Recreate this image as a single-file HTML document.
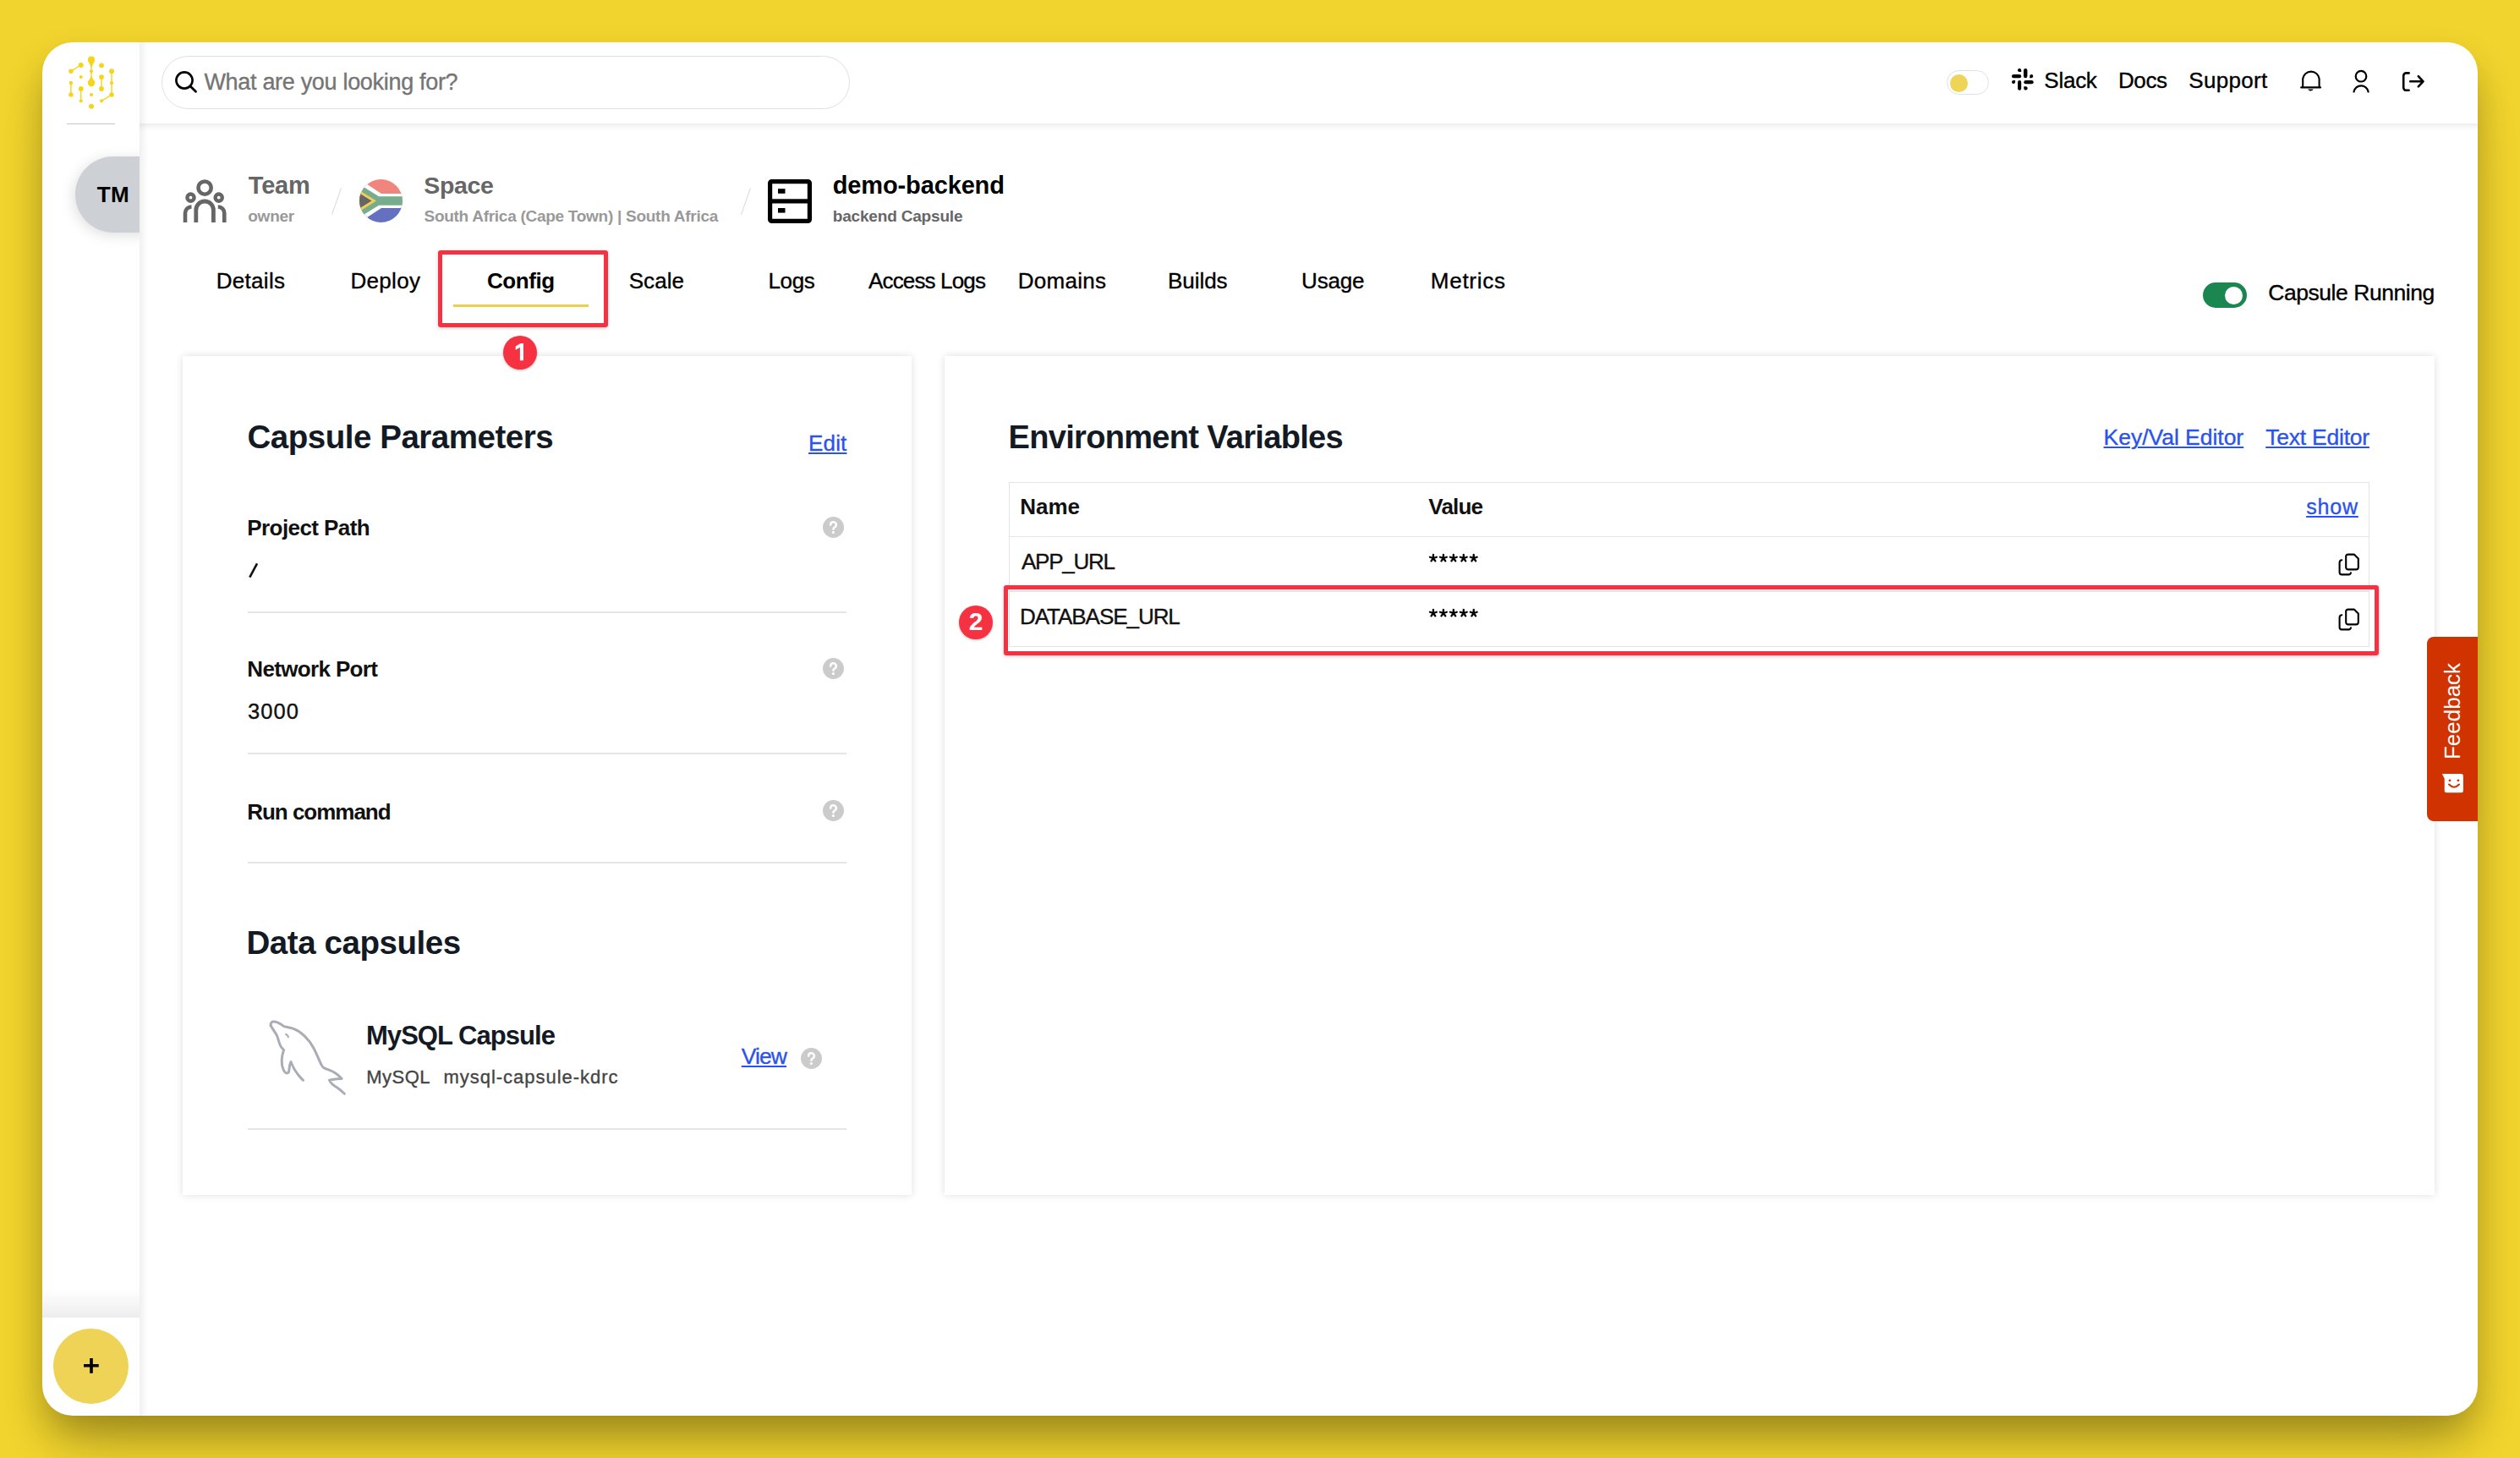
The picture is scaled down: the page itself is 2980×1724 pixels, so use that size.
<!DOCTYPE html>
<html><head><meta charset="utf-8">
<style>
html,body{margin:0;padding:0}
body{width:2980px;height:1724px;position:relative;overflow:hidden;background:#f1d42d;font-family:"Liberation Sans",sans-serif}
.a{position:absolute}
.t{position:absolute;line-height:1;white-space:pre;font-family:"Liberation Sans",sans-serif}
.u{text-decoration:underline;text-decoration-thickness:2px;text-underline-offset:3px}
#win{position:absolute;left:50px;top:50px;width:2880px;height:1624px;background:#fff;border-radius:36px;box-shadow:0 24px 46px -4px rgba(0,0,0,0.29),0 50px 80px -24px rgba(0,0,0,0.14)}
.card{position:absolute;background:#fff;box-shadow:0 0 9px rgba(0,0,0,0.13)}
.div{position:absolute;height:2px;background:#e3e6e8}
.q{position:absolute;width:25px;height:25px;border-radius:50%;background:#cbcbcb}
.q svg{position:absolute;left:0;top:0}
.badge{position:absolute;width:40px;height:40px;border-radius:50%;background:#f63242;box-shadow:0 1px 3px rgba(0,0,0,0.25)}
.redbox{position:absolute;border:5px solid #f53242;border-radius:3px;box-sizing:border-box;box-shadow:0 1px 4px rgba(0,0,0,0.2)}
</style></head><body>
<div id="win"></div>

<!-- sidebar shadow & header shadow -->
<div class="a" style="left:165px;top:50px;width:10px;height:1624px;background:linear-gradient(90deg,rgba(0,0,0,0.06),rgba(0,0,0,0))"></div>
<div class="a" style="left:165px;top:146px;width:2765px;height:10px;background:linear-gradient(180deg,rgba(0,0,0,0.065),rgba(0,0,0,0.015) 60%,rgba(0,0,0,0))"></div>

<!-- logo -->
<svg class="a" style="left:76px;top:62px" width="64" height="72" viewBox="76 62 64 72">
<g fill="#f5d41a" stroke="#f5d41a">
<path d="M108 70.4 L108 98" stroke-width="1.4"/>
<circle cx="108" cy="70.4" r="4" stroke="none"/>
<path d="M104 71.5 Q108 80 108 80 Q108 80 112 71.5Z" stroke="none"/>
<circle cx="108" cy="84.2" r="2" stroke="none"/>
<circle cx="108" cy="98" r="4.2" stroke="none"/>
<path d="M104 97 L108 90 L112 97Z" stroke="none"/>
<circle cx="120" cy="77.3" r="2.9" stroke="none"/>
<path d="M83.9 84.2 L95.75 77" stroke-width="1.4"/>
<circle cx="83.9" cy="84.2" r="2.7" stroke="none"/>
<circle cx="95.75" cy="77" r="3" stroke="none"/>
<circle cx="95.75" cy="91.1" r="2" stroke="none"/>
<path d="M83.9 98 L83.9 111.9" stroke-width="1.4"/>
<circle cx="83.9" cy="98" r="2.2" stroke="none"/>
<circle cx="83.9" cy="111.9" r="2.7" stroke="none"/>
<path d="M95.75 105 L95.75 119.3" stroke-width="1.4"/>
<circle cx="95.75" cy="105" r="2.9" stroke="none"/>
<circle cx="95.75" cy="119.3" r="2" stroke="none"/>
<circle cx="108" cy="112" r="2" stroke="none"/>
<circle cx="108" cy="125.7" r="3" stroke="none"/>
<path d="M120 91.1 L120 105" stroke-width="1.4"/>
<circle cx="120" cy="91.1" r="2.9" stroke="none"/>
<circle cx="120" cy="105" r="2.9" stroke="none"/>
<path d="M132 84.2 L132 112 L120 119.3" stroke-width="1.4" fill="none"/>
<circle cx="132" cy="84.2" r="2.9" stroke="none"/>
<circle cx="132" cy="98" r="2" stroke="none"/>
<circle cx="132" cy="112" r="2.7" stroke="none"/>
<circle cx="120" cy="119.3" r="2" stroke="none"/>
</g></svg>
<div class="a" style="left:79px;top:145.5px;width:57px;height:1.3px;background:#c6c6c6"></div>

<!-- TM pill -->
<div class="a" style="left:50px;top:150px;width:115px;height:170px;overflow:hidden"><div class="a" style="left:39px;top:35px;width:90px;height:90px;background:#cdd0d5;border-radius:45px 0 0 45px;box-shadow:-2px 3px 16px rgba(0,0,0,0.13)"></div></div>

<!-- sidebar bottom -->
<div class="a" style="left:50px;top:1524px;width:115px;height:34px;background:linear-gradient(180deg,rgba(0,0,0,0),rgba(0,0,0,0.07))"></div>
<div class="a" style="left:63px;top:1571px;width:89px;height:89px;border-radius:50%;background:#efd356"></div>
<svg class="a" style="left:99px;top:1606px" width="18" height="18" viewBox="0 0 18 18"><path d="M7.2 0h3.6v6.9h6.9v3.6h-6.9v7.3H7.2v-7.3H0V6.9h7.2z" fill="#000"/></svg>

<!-- search -->
<div class="a" style="left:191px;top:66px;width:814px;height:63px;border:1.2px solid #dfdfe8;border-radius:33px;box-sizing:border-box"></div>
<svg class="a" style="left:205px;top:82px" width="30" height="30" viewBox="0 0 30 30"><circle cx="13" cy="13" r="9.6" fill="none" stroke="#000" stroke-width="2.6"/><path d="M19.8 19.8 L26.5 26.3" stroke="#000" stroke-width="2.8" stroke-linecap="round"/></svg>

<!-- theme toggle -->
<div class="a" style="left:2302px;top:83px;width:50px;height:29px;border:1px solid #dfe1e6;border-radius:15px;box-sizing:border-box"></div>
<div class="a" style="left:2306px;top:88px;width:21px;height:21px;border-radius:50%;background:#efd45a"></div>
<!-- slack icon -->
<svg class="a" style="left:2379px;top:81px" width="26" height="26" viewBox="0 0 26 26" fill="#000">
<rect x="0" y="7.1" width="11.2" height="4.1" rx="2.05"/>
<rect x="14" y="0" width="4.4" height="11.2" rx="2.2"/>
<path d="M7 2.05 A2.05 2.05 0 0 1 11.2 2.05 V4.1 H9.1 A2.05 2.05 0 0 1 7 2.05Z"/>
<path d="M21.2 9.15 A2.05 2.05 0 1 1 23.3 11.2 H21.2Z"/>
<path d="M4.1 14 V16.1 A2.05 2.05 0 1 1 2 14Z"/>
<rect x="7.1" y="14" width="4.1" height="11.7" rx="2.05"/>
<rect x="14.3" y="14" width="11.4" height="4.3" rx="2.15"/>
<path d="M14.3 21.2 H16.4 A2.2 2.2 0 1 1 14.3 23.4Z"/>
</svg>
<!-- bell -->
<svg class="a" style="left:2718px;top:81px" width="30" height="30" viewBox="0 0 30 30" fill="none" stroke="#000" stroke-width="2.1" stroke-linecap="round">
<path d="M5.2 21.9 V12 A9.8 9.8 0 0 1 24.6 12 V21.9"/>
<path d="M3.2 22.4 H26"/>
<path d="M11.2 24.5 A3.6 3.6 0 0 0 17.6 24.5Z" fill="#000" stroke="none"/>
</svg>
<!-- user -->
<svg class="a" style="left:2778px;top:81px" width="30" height="30" viewBox="0 0 30 30" fill="none" stroke="#000" stroke-width="2.2">
<circle cx="14" cy="9.2" r="6.3"/>
<path d="M5.5 27.5 A8.7 8.7 0 0 1 22.6 27.5" stroke-linecap="round"/>
</svg>
<!-- logout -->
<svg class="a" style="left:2836px;top:81px" width="34" height="30" viewBox="0 0 34 30" fill="none" stroke="#000" stroke-width="2.6" stroke-linecap="round" stroke-linejoin="round">
<path d="M12.6 5.4 H9.6 A3.2 3.2 0 0 0 6.2 8.6 V22.6 A3.2 3.2 0 0 0 9.6 25.8 H12.6"/>
<path d="M14.2 15.3 H29.5 M23.8 9.2 L29.5 15.3 L23.8 21.3"/>
</svg>

<!-- team icon -->
<svg class="a" style="left:0;top:0" width="300" height="300" viewBox="0 0 300 300" fill="none" stroke="#666" stroke-width="4.6">
<circle cx="242.1" cy="222.1" r="7.6"/>
<circle cx="225.5" cy="233.6" r="4.1" stroke-width="4.4"/>
<circle cx="258.7" cy="233.6" r="4.1" stroke-width="4.4"/>
<path d="M231.8 263 V248.3 A10.3 10.3 0 0 1 252.4 248.3 V263" stroke-width="4.8"/>
<path d="M219 263 V252 A7.5 7.5 0 0 1 226.5 244.5"/>
<path d="M265.3 263 V252 A7.5 7.5 0 0 0 257.8 244.5"/>
</svg>
<!-- slashes -->
<svg class="a" style="left:390px;top:220px" width="16" height="36"><path d="M13.5 2.5 L2.5 33.5" stroke="#dcdfe4" stroke-width="1.2"/></svg>
<svg class="a" style="left:874px;top:220px" width="16" height="36"><path d="M13.5 2.5 L2.5 33.5" stroke="#dcdfe4" stroke-width="1.2"/></svg>
<!-- flag -->
<svg class="a" style="left:425px;top:212px" width="51" height="51" viewBox="0 0 51 51">
<defs><clipPath id="fc"><circle cx="25.5" cy="25.5" r="25.5"/></clipPath></defs>
<g clip-path="url(#fc)">
<rect x="0" y="0" width="51" height="25.5" fill="#f0857d"/>
<rect x="0" y="25.5" width="51" height="25.5" fill="#6470c0"/>
<path d="M0 0 L26 17 H51 V34 H26 L0 51Z" fill="#fff"/>
<path d="M0 6 L23 20.2 H51 V30.8 H23 L0 45Z" fill="#77ad8c"/>
<path d="M0 13 L20 25.5 L0 38Z" fill="#f3cd5a"/>
<path d="M0 16.5 L14.5 25.5 L0 34.5Z" fill="#666"/>
</g></svg>
<!-- server icon -->
<svg class="a" style="left:908px;top:212px" width="52" height="52" viewBox="0 0 52 52">
<rect x="2.6" y="2.6" width="46.8" height="46.8" rx="2" fill="none" stroke="#000" stroke-width="5.2"/>
<rect x="2" y="23.3" width="48" height="5.2" fill="#000"/>
<rect x="12" y="11.2" width="8.5" height="5.6" fill="#000"/>
<rect x="12" y="34" width="8.5" height="5.6" fill="#000"/>
</svg>

<!-- tabs underline + red box + badge -->
<div class="a" style="left:536px;top:359.5px;width:160px;height:3.5px;background:#ecd04a"></div>
<div class="redbox" style="left:518px;top:296px;width:201px;height:91px"></div>

<!-- capsule running toggle -->
<div class="a" style="left:2605px;top:334px;width:52px;height:30px;border-radius:15px;background:#1a8650"></div>
<div class="a" style="left:2631px;top:338.5px;width:21px;height:21px;border-radius:50%;background:#fff"></div>

<!-- left card -->
<div class="card" style="left:216px;top:421px;width:862px;height:992px"></div>
<div class="div" style="left:293px;top:722.5px;width:708px"></div>
<div class="div" style="left:293px;top:889.5px;width:708px"></div>
<div class="div" style="left:293px;top:1018.5px;width:708px"></div>
<div class="div" style="left:293px;top:1334px;width:708px"></div>
<div class="q" style="left:973px;top:610.7px"><svg width="25" height="25" viewBox="0 0 25 25"><path d="M9.2 9.6 A3.3 3.3 0 1 1 14.2 12.3 Q12.4 13.3 12.4 14.8" fill="none" stroke="#fff" stroke-width="2.5" stroke-linecap="round"/><circle cx="12.4" cy="18.5" r="1.6" fill="#fff"/></svg></div>
<div class="q" style="left:973px;top:778px"><svg width="25" height="25" viewBox="0 0 25 25"><path d="M9.2 9.6 A3.3 3.3 0 1 1 14.2 12.3 Q12.4 13.3 12.4 14.8" fill="none" stroke="#fff" stroke-width="2.5" stroke-linecap="round"/><circle cx="12.4" cy="18.5" r="1.6" fill="#fff"/></svg></div>
<div class="q" style="left:973px;top:946px"><svg width="25" height="25" viewBox="0 0 25 25"><path d="M9.2 9.6 A3.3 3.3 0 1 1 14.2 12.3 Q12.4 13.3 12.4 14.8" fill="none" stroke="#fff" stroke-width="2.5" stroke-linecap="round"/><circle cx="12.4" cy="18.5" r="1.6" fill="#fff"/></svg></div>
<div class="q" style="left:947px;top:1239px"><svg width="25" height="25" viewBox="0 0 25 25"><path d="M9.2 9.6 A3.3 3.3 0 1 1 14.2 12.3 Q12.4 13.3 12.4 14.8" fill="none" stroke="#fff" stroke-width="2.5" stroke-linecap="round"/><circle cx="12.4" cy="18.5" r="1.6" fill="#fff"/></svg></div>
<!-- dolphin -->
<svg class="a" style="left:310px;top:1195px" width="110" height="110" viewBox="0 0 110 110" fill="none" stroke="#a8adb6" stroke-width="3" stroke-linejoin="round" stroke-linecap="round">
<path d="M10.2 17.8 C9.5 14 12 12.6 14.5 13 C18 13.5 22 15.5 25.7 18.6 C29 19.5 33 19.8 37 21.3 C42 23.2 46 26 50 29.8 C54 33.6 58 38.5 61 44.5 C64 50 67 58 70.3 64.5 C71.2 66.5 72.5 67.8 74.5 68.5 C78 69.8 82 71 86 73.5 C89 75.5 92 78 94 80.5 C89 80.8 84 81 79.5 82.3 C81 86 85 89 89 91.3 C92 93.3 95 96 97.3 98.3"/>
<path d="M10.2 17.8 C12 21 15 25 17.2 29 C19 33 20 38 21.6 41.5 C22.5 43.5 24 45 25.6 46.5 C24.5 50 23.5 53 23.3 57 C23 61 23.5 66 25 69.5 C26 72 27.5 74 29.4 74 C31 74 31.7 72.5 31.8 70.5 C32 67 32.5 63.5 34 60.5 C36 66 40 73 44 77.5 C45.5 79.5 47 81 48.5 82.3" />
<path d="M28 27.8 C29.5 28.5 30.8 29.7 30.9 31.4" stroke-width="2"/>
</svg>

<!-- right card -->
<div class="card" style="left:1117px;top:421px;width:1762px;height:992px"></div>
<div class="a" style="left:1193px;top:569.5px;width:1609px;height:195px;border:1.5px solid #e1e4e8;box-sizing:border-box"></div>
<div class="a" style="left:1193px;top:633.5px;width:1609px;height:1.5px;background:#e1e4e8"></div>
<div class="a" style="left:1193px;top:698px;width:1609px;height:1.5px;background:#e1e4e8"></div>
<!-- stars -->
<svg class="a" style="left:0;top:0" width="2980" height="800" viewBox="0 0 2980 800"><path d="M1694.90 660.00 L1694.90 655.90 M1694.90 660.00 L1698.80 658.73 M1694.90 660.00 L1697.31 663.32 M1694.90 660.00 L1692.49 663.32 M1694.90 660.00 L1691.00 658.73 M1706.85 660.00 L1706.85 655.90 M1706.85 660.00 L1710.75 658.73 M1706.85 660.00 L1709.26 663.32 M1706.85 660.00 L1704.44 663.32 M1706.85 660.00 L1702.95 658.73 M1718.80 660.00 L1718.80 655.90 M1718.80 660.00 L1722.70 658.73 M1718.80 660.00 L1721.21 663.32 M1718.80 660.00 L1716.39 663.32 M1718.80 660.00 L1714.90 658.73 M1730.75 660.00 L1730.75 655.90 M1730.75 660.00 L1734.65 658.73 M1730.75 660.00 L1733.16 663.32 M1730.75 660.00 L1728.34 663.32 M1730.75 660.00 L1726.85 658.73 M1742.70 660.00 L1742.70 655.90 M1742.70 660.00 L1746.60 658.73 M1742.70 660.00 L1745.11 663.32 M1742.70 660.00 L1740.29 663.32 M1742.70 660.00 L1738.80 658.73 M1694.90 725.00 L1694.90 720.90 M1694.90 725.00 L1698.80 723.73 M1694.90 725.00 L1697.31 728.32 M1694.90 725.00 L1692.49 728.32 M1694.90 725.00 L1691.00 723.73 M1706.85 725.00 L1706.85 720.90 M1706.85 725.00 L1710.75 723.73 M1706.85 725.00 L1709.26 728.32 M1706.85 725.00 L1704.44 728.32 M1706.85 725.00 L1702.95 723.73 M1718.80 725.00 L1718.80 720.90 M1718.80 725.00 L1722.70 723.73 M1718.80 725.00 L1721.21 728.32 M1718.80 725.00 L1716.39 728.32 M1718.80 725.00 L1714.90 723.73 M1730.75 725.00 L1730.75 720.90 M1730.75 725.00 L1734.65 723.73 M1730.75 725.00 L1733.16 728.32 M1730.75 725.00 L1728.34 728.32 M1730.75 725.00 L1726.85 723.73 M1742.70 725.00 L1742.70 720.90 M1742.70 725.00 L1746.60 723.73 M1742.70 725.00 L1745.11 728.32 M1742.70 725.00 L1740.29 728.32 M1742.70 725.00 L1738.80 723.73 " stroke="#000" stroke-width="2.3" stroke-linecap="round" fill="none"/></svg>
<!-- copy icons -->
<svg class="a" style="left:2762px;top:652px" width="30" height="32" viewBox="0 0 30 32" fill="none" stroke="#000" stroke-width="2.1" stroke-linecap="round" stroke-linejoin="round">
<path d="M12.2 5.6 A2.6 2.6 0 0 1 14.8 3.6 H21.8 L26.8 8.6 V18.8 A2.6 2.6 0 0 1 24.2 21.4 H14.8 A2.6 2.6 0 0 1 12.2 18.8Z"/>
<path d="M7.3 10.2 A3 3 0 0 0 4.6 13 V24.8 A2.6 2.6 0 0 0 7.2 27.4 H15.4 A2.6 2.6 0 0 0 18 25.2"/>
</svg>
<svg class="a" style="left:2762px;top:717px" width="30" height="32" viewBox="0 0 30 32" fill="none" stroke="#000" stroke-width="2.1" stroke-linecap="round" stroke-linejoin="round">
<path d="M12.2 5.6 A2.6 2.6 0 0 1 14.8 3.6 H21.8 L26.8 8.6 V18.8 A2.6 2.6 0 0 1 24.2 21.4 H14.8 A2.6 2.6 0 0 1 12.2 18.8Z"/>
<path d="M7.3 10.2 A3 3 0 0 0 4.6 13 V24.8 A2.6 2.6 0 0 0 7.2 27.4 H15.4 A2.6 2.6 0 0 0 18 25.2"/>
</svg>
<div class="redbox" style="left:1187px;top:692px;width:1626px;height:83px"></div>

<!-- feedback tab -->
<div class="a" style="left:2869.5px;top:753px;width:60.5px;height:218px;background:#d13300;border-radius:8px 0 0 8px"></div>
<div class="t" style="left:2900px;top:840.6px;font-size:26px;color:#fff;transform:translate(-50%,-50%) rotate(-90deg);transform-origin:center">Feedback</div>
<svg class="a" style="left:2886px;top:913px" width="28" height="26" viewBox="0 0 28 26">
<path d="M1.8 1.9 H24.4 A2.5 2.5 0 0 1 26.9 4.4 V21.7 A2.5 2.5 0 0 1 24.4 24.2 H7.2 A2.5 2.5 0 0 1 4.7 21.7 V7.5 Z" fill="#fff"/>
<circle cx="11" cy="9.8" r="1.4" fill="#d13300"/><circle cx="20.9" cy="9.8" r="1.4" fill="#d13300"/>
<path d="M10 14.6 Q16 20.8 22 14.6" fill="none" stroke="#d13300" stroke-width="2.1" stroke-linecap="round"/>
</svg>

<!-- badge numbers -->
<div class="badge" style="left:595px;top:397px"></div>
<div class="badge" style="left:1134px;top:716px"></div>

<svg class="a" style="left:600px;top:400px" width="30" height="30" viewBox="600 400 30 30"><path d="M609.7 409.6 L615.6 406 H619 V426.3 H614.9 V410.8 L609.7 413.8 Z" fill="#fff"/></svg>
<div class="t" style="left:1143px;top:720px;width:22px;text-align:center;font-size:30px;font-weight:bold;color:#fff">2</div>

<svg class="a" style="left:290px;top:662px" width="20" height="26" viewBox="290 662 20 26"><path d="M295.3 682.6 L304 666.3" stroke="#111" stroke-width="2.6" stroke-linecap="butt"/></svg>
<div class="t" style="left:241.45px;top:83.75px;font-size:27px;font-weight:normal;color:#757575;letter-spacing:-0.312px;-webkit-text-stroke:0.35px #757575;">What are you looking for?</div>
<div class="t" style="left:2417.35px;top:81.90px;font-size:26px;font-weight:normal;color:#000;letter-spacing:-0.262px;-webkit-text-stroke:0.35px #000;">Slack</div>
<div class="t" style="left:2505.00px;top:81.90px;font-size:26px;font-weight:normal;color:#000;letter-spacing:-0.417px;-webkit-text-stroke:0.35px #000;">Docs</div>
<div class="t" style="left:2588.25px;top:81.90px;font-size:26px;font-weight:normal;color:#000;letter-spacing:0.333px;-webkit-text-stroke:0.35px #000;">Support</div>
<div class="t" style="left:114.75px;top:216.90px;font-size:26px;font-weight:bold;color:#000;letter-spacing:0.250px;">TM</div>
<div class="t" style="left:293.75px;top:205.35px;font-size:29px;font-weight:bold;color:#666;letter-spacing:-0.167px;">Team</div>
<div class="t" style="left:293.25px;top:245.85px;font-size:19px;font-weight:bold;color:#999;letter-spacing:-0.250px;">owner</div>
<div class="t" style="left:501.25px;top:205.47px;font-size:28.5px;font-weight:bold;color:#666;letter-spacing:-0.312px;">Space</div>
<div class="t" style="left:501.50px;top:245.85px;font-size:19px;font-weight:bold;color:#999;letter-spacing:-0.276px;">South Africa (Cape Town) | South Africa</div>
<div class="t" style="left:984.75px;top:205.35px;font-size:29px;font-weight:bold;color:#000;letter-spacing:-0.136px;">demo-backend</div>
<div class="t" style="left:984.75px;top:245.85px;font-size:19px;font-weight:bold;color:#666;letter-spacing:-0.179px;">backend Capsule</div>
<div class="t" style="left:255.80px;top:318.90px;font-size:26px;font-weight:normal;color:#000;letter-spacing:0.283px;-webkit-text-stroke:0.35px #000;">Details</div>
<div class="t" style="left:414.50px;top:318.90px;font-size:26px;font-weight:normal;color:#000;letter-spacing:0.300px;-webkit-text-stroke:0.35px #000;">Deploy</div>
<div class="t" style="left:576.00px;top:318.90px;font-size:26px;font-weight:bold;color:#000;letter-spacing:-0.430px;">Config</div>
<div class="t" style="left:743.75px;top:318.90px;font-size:26px;font-weight:normal;color:#000;letter-spacing:0.025px;-webkit-text-stroke:0.35px #000;">Scale</div>
<div class="t" style="left:908.50px;top:318.90px;font-size:26px;font-weight:normal;color:#000;letter-spacing:-0.367px;-webkit-text-stroke:0.35px #000;">Logs</div>
<div class="t" style="left:1027.00px;top:318.90px;font-size:26px;font-weight:normal;color:#000;letter-spacing:-0.850px;-webkit-text-stroke:0.35px #000;">Access Logs</div>
<div class="t" style="left:1203.70px;top:318.90px;font-size:26px;font-weight:normal;color:#000;letter-spacing:0.300px;-webkit-text-stroke:0.35px #000;">Domains</div>
<div class="t" style="left:1381.00px;top:318.90px;font-size:26px;font-weight:normal;color:#000;letter-spacing:-0.050px;-webkit-text-stroke:0.35px #000;">Builds</div>
<div class="t" style="left:1539.00px;top:318.90px;font-size:26px;font-weight:normal;color:#000;letter-spacing:-0.150px;-webkit-text-stroke:0.35px #000;">Usage</div>
<div class="t" style="left:1691.80px;top:318.90px;font-size:26px;font-weight:normal;color:#000;letter-spacing:0.742px;-webkit-text-stroke:0.35px #000;">Metrics</div>
<div class="t" style="left:2682.25px;top:332.58px;font-size:26.5px;font-weight:normal;color:#000;letter-spacing:-0.446px;-webkit-text-stroke:0.35px #000;">Capsule Running</div>
<div class="t" style="left:292.50px;top:497.88px;font-size:38.5px;font-weight:bold;color:#141a24;letter-spacing:-0.471px;">Capsule Parameters</div>
<div class="t" style="left:956.00px;top:510.90px;font-size:26px;font-weight:normal;color:#2a52ec;letter-spacing:0.167px;-webkit-text-stroke:0.35px #2a52ec;text-decoration:underline;text-decoration-thickness:2px;text-underline-offset:2px;">Edit</div>
<div class="t" style="left:292.25px;top:611.40px;font-size:26px;font-weight:bold;color:#111;letter-spacing:-0.568px;">Project Path</div>
<div class="t" style="left:292.25px;top:778.20px;font-size:26px;font-weight:bold;color:#111;letter-spacing:-0.641px;">Network Port</div>
<div class="t" style="left:293.00px;top:829.33px;font-size:25.5px;font-weight:normal;color:#111;letter-spacing:1.083px;-webkit-text-stroke:0.35px #111;">3000</div>
<div class="t" style="left:292.25px;top:946.50px;font-size:26px;font-weight:bold;color:#111;letter-spacing:-1.025px;">Run command</div>
<div class="t" style="left:291.50px;top:1096.48px;font-size:38.5px;font-weight:bold;color:#141a24;letter-spacing:-0.438px;">Data capsules</div>
<div class="t" style="left:433.00px;top:1209.25px;font-size:31px;font-weight:bold;color:#141a24;letter-spacing:-0.958px;">MySQL Capsule</div>
<div class="t" style="left:433.25px;top:1262.90px;font-size:22px;font-weight:normal;color:#444;letter-spacing:0.463px;-webkit-text-stroke:0.35px #444;">MySQL</div>
<div class="t" style="left:524.50px;top:1262.90px;font-size:22px;font-weight:normal;color:#444;letter-spacing:0.971px;-webkit-text-stroke:0.35px #444;">mysql-capsule-kdrc</div>
<div class="t" style="left:876.75px;top:1236.47px;font-size:26.5px;font-weight:normal;color:#2a52ec;letter-spacing:-0.917px;-webkit-text-stroke:0.35px #2a52ec;text-decoration:underline;text-decoration-thickness:2px;text-underline-offset:2px;">View</div>
<div class="t" style="left:1192.50px;top:497.70px;font-size:38px;font-weight:bold;color:#141a24;letter-spacing:-0.675px;">Environment Variables</div>
<div class="t" style="left:2487.55px;top:504.48px;font-size:26.5px;font-weight:normal;color:#2a52ec;letter-spacing:-0.023px;-webkit-text-stroke:0.35px #2a52ec;text-decoration:underline;text-decoration-thickness:2px;text-underline-offset:2px;">Key/Val Editor</div>
<div class="t" style="left:2679.20px;top:504.48px;font-size:26.5px;font-weight:normal;color:#2a52ec;letter-spacing:-0.225px;-webkit-text-stroke:0.35px #2a52ec;text-decoration:underline;text-decoration-thickness:2px;text-underline-offset:2px;">Text Editor</div>
<div class="t" style="left:1206.25px;top:585.90px;font-size:26px;font-weight:bold;color:#111;letter-spacing:0.000px;">Name</div>
<div class="t" style="left:1689.35px;top:585.90px;font-size:26px;font-weight:bold;color:#111;letter-spacing:-0.837px;">Value</div>
<div class="t" style="left:2727.15px;top:586.75px;font-size:25px;font-weight:normal;color:#2a52ec;letter-spacing:0.833px;-webkit-text-stroke:0.35px #2a52ec;text-decoration:underline;text-decoration-thickness:2px;text-underline-offset:2px;">show</div>
<div class="t" style="left:1208.00px;top:650.90px;font-size:26px;font-weight:normal;color:#111;letter-spacing:-1.250px;-webkit-text-stroke:0.35px #111;">APP_URL</div>
<div class="t" style="left:1206.00px;top:715.90px;font-size:26px;font-weight:normal;color:#111;letter-spacing:-1.045px;-webkit-text-stroke:0.35px #111;">DATABASE_URL</div>
</body></html>
